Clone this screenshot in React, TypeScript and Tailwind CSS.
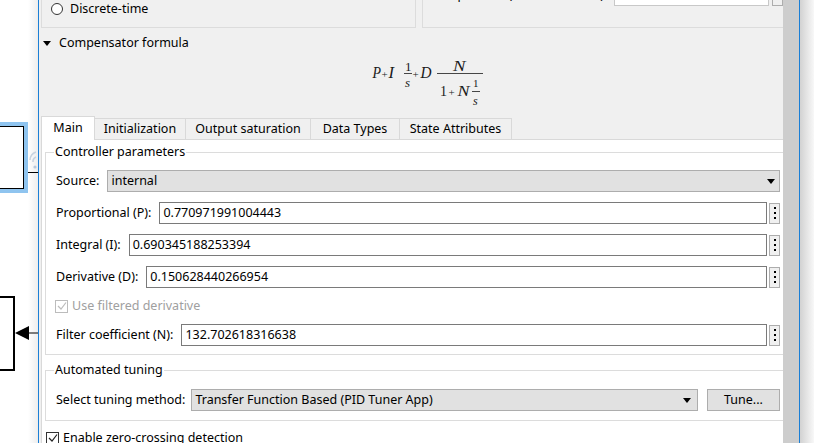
import React from "react";

const Dots = () => (
  <div className="ml-[2px] w-[11px] h-[21px] border border-[#adadad] bg-[#f0f0f0] flex flex-col items-center justify-center gap-[3px] shrink-0">
    <span className="w-[2px] h-[2px] bg-black" />
    <span className="w-[2px] h-[2px] bg-black" />
    <span className="w-[2px] h-[2px] bg-black" />
  </div>
);

const Arrow = () => (
  <svg width="8" height="5" viewBox="0 0 8 5" className="shrink-0">
    <polygon points="0,0 8,0 4,5" fill="#000" />
  </svg>
);

const FieldRow = ({ label, value }: { label: string; value: string }) => (
  <div className="flex items-center h-[22px]">
    <span className="whitespace-nowrap">{label}</span>
    <div className="ml-2 flex-1 h-[22px] border border-[#7a7a7a] bg-white flex items-center pl-[3px] whitespace-nowrap">
      {value}
    </div>
    <Dots />
  </div>
);

const Check = ({ color }: { color: string }) => (
  <svg width="10" height="10" viewBox="0 0 10 10">
    <polyline points="1,5 4,8 9,1.5" fill="none" stroke={color} strokeWidth="1.2" />
  </svg>
);

export default function App() {
  return (
    <div className="w-[814px] h-[443px] flex overflow-hidden bg-white text-[12.5px] leading-[16px] text-black font-['Noto_Sans',sans-serif]">
      {/* Simulink canvas */}
      <div className="relative w-[38px] h-full bg-white overflow-hidden shrink-0">
        <div className="absolute left-[-10px] top-[122px] w-[38px] h-[71px] bg-[#8fc4ef] p-[4px]">
          <div className="w-full h-full border-[1.5px] border-black bg-white" />
        </div>
        <div className="absolute left-[28px] top-[172px] w-[10px] h-[1px] bg-black" />
        <div className="absolute left-[-10px] top-[296px] w-[25px] h-[75px] border-2 border-black bg-white" />
        <svg className="absolute left-[14px] top-[325px]" width="24" height="16" viewBox="0 0 24 16">
          <polygon points="1,8 15,1 15,15" fill="#000" />
          <line x1="15" y1="8" x2="24" y2="8" stroke="#000" strokeWidth="1" />
        </svg>
        <div className="absolute right-0 top-0 w-[10px] h-full bg-gradient-to-r from-transparent to-[#00000012]" />
        <svg className="absolute left-[28px] top-[148px]" width="10" height="22" viewBox="0 0 10 22">
          <path d="M8 4 A9 9 0 0 0 2 12" fill="none" stroke="#c8d3e0" strokeWidth="1.5" />
          <path d="M8 9 A5 5 0 0 0 5 14" fill="none" stroke="#c8d3e0" strokeWidth="1.5" />
          <circle cx="7" cy="19" r="1.6" fill="#b9c9dc" />
        </svg>
      </div>

      <div className="w-[1px] h-full bg-[#1b7fd6] shrink-0" />

      {/* Dialog content */}
      <div className="w-[744px] h-full bg-[#f0f0f0] overflow-hidden flex flex-col shrink-0">
        {/* top group boxes */}
        <div className="flex h-[28px] shrink-0">
          <div className="ml-[2px] w-[375px] h-[28px] border-l border-r border-b border-[#dcdcdc] flex items-start pl-[9px] pt-[2px] shrink-0">
            <div className="flex items-center h-[14px]">
              <span className="w-[12px] h-[12px] rounded-full border border-[#333] bg-white" />
              <span className="ml-[7px]">Discrete-time</span>
            </div>
          </div>
          <div className="ml-[6px] flex-1 h-[28px] border-l border-b border-[#dcdcdc] overflow-hidden">
            <div className="flex items-center h-[22px] -mt-[16px] pl-[9px]">
              <span className="whitespace-nowrap w-[185px]">Sample time (-1 for inherited):</span>
              <div className="w-[155px] h-[22px] border border-[#c8c8c8] bg-white pl-[3px] shrink-0">-1</div>
              <div className="ml-[3px] w-[11px] h-[21px] border border-[#adadad] bg-[#f0f0f0] shrink-0" />
            </div>
          </div>
        </div>

        {/* compensator formula */}
        <div className="flex items-center h-[16px] mt-[7px] ml-[4px] shrink-0">
          <Arrow />
          <span className="ml-[8px]">Compensator formula</span>
        </div>
        <svg width="744" height="65" viewBox="0 0 744 65" className="shrink-0 font-['Liberation_Serif',serif]" fill="#1a1a1a">
          <text x="333.5" y="27" fontSize="16" fontStyle="italic" textLength="8.5" lengthAdjust="spacingAndGlyphs">P</text>
          <text x="342.5" y="26.5" fontSize="11">+</text>
          <text x="349.5" y="27" fontSize="16" fontStyle="italic" textLength="5.5" lengthAdjust="spacingAndGlyphs">I</text>
          <text x="366" y="20" fontSize="13">1</text>
          <line x1="365" y1="22.5" x2="373" y2="22.5" stroke="#1a1a1a" strokeWidth="0.8" />
          <text x="366" y="36" fontSize="13" fontStyle="italic">s</text>
          <text x="373.5" y="26.5" fontSize="11">+</text>
          <text x="381.5" y="27" fontSize="16" fontStyle="italic" textLength="11" lengthAdjust="spacingAndGlyphs">D</text>
          <line x1="398" y1="22.5" x2="444" y2="22.5" stroke="#1a1a1a" strokeWidth="0.8" />
          <text x="414" y="20" fontSize="14" fontStyle="italic" textLength="12.5" lengthAdjust="spacingAndGlyphs">N</text>
          <text x="401" y="45" fontSize="14">1</text>
          <text x="409.5" y="44.5" fontSize="11">+</text>
          <text x="418.5" y="45" fontSize="14" fontStyle="italic" textLength="12" lengthAdjust="spacingAndGlyphs">N</text>
          <text x="434" y="36" fontSize="11">1</text>
          <line x1="433" y1="40.5" x2="441" y2="40.5" stroke="#1a1a1a" strokeWidth="0.8" />
          <text x="434" y="54" fontSize="12" fontStyle="italic">s</text>
        </svg>

        {/* tabs */}
        <div className="flex items-end h-[23px] ml-[2px] shrink-0">
          <div className="relative z-10 -mb-px w-[54px] h-[24px] bg-white border-l border-t border-r border-[#d9d9d9] flex items-center justify-center pb-[2px] shrink-0">
            Main
          </div>
          <div className="w-[91px] h-[21px] border-t border-r border-[#d9d9d9] flex items-center justify-center whitespace-nowrap shrink-0">Initialization</div>
          <div className="w-[125px] h-[21px] border-t border-r border-[#d9d9d9] flex items-center justify-center whitespace-nowrap shrink-0">Output saturation</div>
          <div className="w-[89px] h-[21px] border-t border-r border-[#d9d9d9] flex items-center justify-center whitespace-nowrap shrink-0">Data Types</div>
          <div className="w-[112px] h-[21px] border-t border-r border-[#d9d9d9] flex items-center justify-center whitespace-nowrap shrink-0">State Attributes</div>
        </div>

        {/* tab pane */}
        <div className="ml-[2px] w-[760px] flex-1 bg-white border-t border-l border-[#d9d9d9] pl-[3px]">
          <fieldset className="mt-[4px] w-[741px] border border-[#dcdcdc] pl-[10px] pr-[5px] pt-[10px] pb-[8px]">
            <legend className="-ml-[2px] px-[1px] leading-[16px]">Controller parameters</legend>
            <div className="flex flex-col gap-[10px]">
              <div className="flex items-center h-[22px]">
                <span className="whitespace-nowrap">Source:</span>
                <div className="ml-2 flex-1 h-[22px] border border-[#adadad] bg-[#e1e1e1] flex items-center pl-[3px] pr-[4px]">
                  <span className="flex-1">internal</span>
                  <Arrow />
                </div>
              </div>
              <FieldRow label="Proportional (P):" value="0.770971991004443" />
              <FieldRow label="Integral (I):" value="0.690345188253394" />
              <FieldRow label="Derivative (D):" value="0.150628440266954" />
              <div className="flex items-center h-[16px] -ml-[1px]">
                <span className="w-[13px] h-[13px] border border-[#bcbcbc] bg-white flex items-center justify-center">
                  <Check color="#bcbcbc" />
                </span>
                <span className="ml-[4px] text-[#a0a0a0]">Use filtered derivative</span>
              </div>
              <FieldRow label="Filter coefficient (N):" value="132.702618316638" />
            </div>
          </fieldset>

          <fieldset className="mt-[7px] w-[741px] border border-[#dcdcdc] pl-[10px] pr-[5px] pt-[11px] pb-[9px]">
            <legend className="-ml-[2px] px-[1px] leading-[16px]">Automated tuning</legend>
            <div className="flex items-center h-[22px]">
              <span className="whitespace-nowrap">Select tuning method:</span>
              <div className="ml-[6px] flex-1 h-[22px] border border-[#adadad] bg-[#e1e1e1] flex items-center pl-[3px] pr-[6px]">
                <span className="flex-1 whitespace-nowrap">Transfer Function Based (PID Tuner App)</span>
                <Arrow />
              </div>
              <div className="ml-[9px] w-[73px] h-[22px] border border-[#adadad] bg-[#e1e1e1] flex items-center justify-center shrink-0">
                Tune...
              </div>
            </div>
          </fieldset>

          <div className="mt-[10px] ml-[1px] flex items-center h-[14px]">
            <span className="w-[13px] h-[13px] border border-[#333] bg-white flex items-center justify-center">
              <Check color="#222" />
            </span>
            <span className="ml-[4px]">Enable zero-crossing detection</span>
          </div>
        </div>
      </div>

      <div className="w-[16px] h-full bg-[#cdcdcd] shrink-0" />
      <div className="w-[1px] h-full bg-[#1b7fd6] shrink-0" />
      <div className="w-[14px] h-full bg-gradient-to-r from-[#d2d2d2] to-[#f8f8f8] shrink-0" />
    </div>
  );
}
